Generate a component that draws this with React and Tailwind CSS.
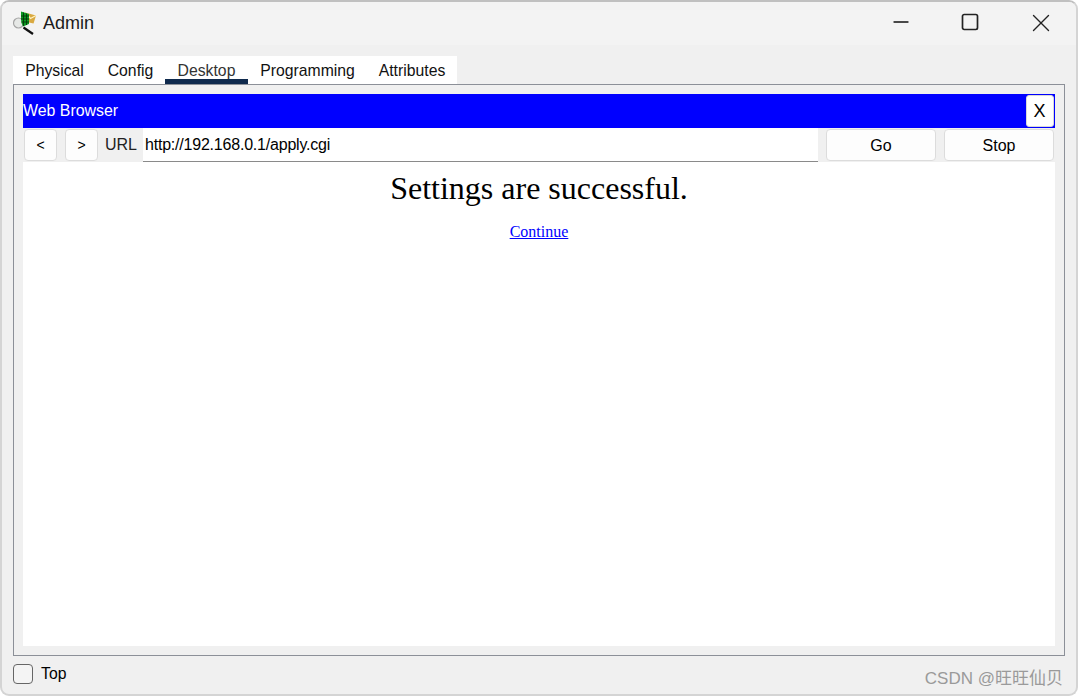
import { Minus, Square, X } from 'lucide-react';

const tabs = [
  { name: 'Physical', width: 'w-[83px]' },
  { name: 'Config', width: 'w-[69px]' },
  { name: 'Desktop', width: 'w-[83px]' },
  { name: 'Programming', width: 'w-[119px]' },
  { name: 'Attributes', width: 'w-[90px]' },
];

function AppIcon() {
  return (
    <svg width="24" height="24" viewBox="0 0 24 24" className="shrink-0">
      <circle cx="5.500" cy="12" r="5" fill="#e6e8e6" stroke="#a5a5a5" strokeWidth="1.200" />
      <path d="M10.500 16.500L20 23" stroke="#111" strokeWidth="2.200" />
      <path d="M12 1.500L23 4.500L20.500 12.500L14 11z" fill="#d9a941" />
      <path d="M13 2L17.500 7.500L23 4.500" fill="none" stroke="#fff2c4" strokeWidth="1.200" />
      <path d="M8 .5L16 3V13L10 15.500Q8 12 8 8z" fill="#0c9a22" />
      <path d="M10.500 1.500V15M13.500 2.500V14M8 5H16M8 8H16M8.500 11H16" stroke="#04380a" strokeWidth=".9" />
    </svg>
  );
}

function Btn({ className, children }) {
  return (
    <button className={'h-[32px] rounded-[4px] border border-[#dcdcdc] bg-[#fdfdfd] pt-px text-black ' + className}>
      {children}
    </button>
  );
}

export default function App() {
  return (
    <div className="h-[696px] w-[1078px] bg-white font-['Liberation_Sans',Arial,sans-serif] text-[16px] text-black">
      <div className="relative flex h-full w-full flex-col overflow-hidden rounded-[9px] border-2 border-[#d4d4d4] border-t-[#c0c0c0] bg-[#f0f0f0]">
        <div className="-mx-[2px] -mt-[2px] flex h-[45px] shrink-0 items-center bg-[#f3f3f3] pl-[13px]">
          <AppIcon />
          <span className="ml-[6px] pt-[2px] text-[18px] text-[#1a1a1a]">Admin</span>
          <div className="ml-auto flex items-center">
            <Minus size={24} strokeWidth={1.3} absoluteStrokeWidth className="-mt-px mr-[47px] text-[#111]" />
            <Square size={20} strokeWidth={1.7} absoluteStrokeWidth className="-mt-px mr-[46px] text-[#222]" />
            <X size={30} strokeWidth={1.4} absoluteStrokeWidth className="mr-[22px] text-[#222]" />
          </div>
        </div>

        <div className="-mx-[2px] flex min-h-0 flex-1 flex-col px-[13px] pt-[11px]">
          <div className="flex h-[28px] w-[444px] shrink-0 bg-white text-[15.75px]">
            {tabs.map((t) => (
              <div key={t.name} className={'flex h-full items-start justify-center pt-[4px] leading-[21px] ' + t.width + (t.name === 'Desktop' ? ' border-b-[5px] border-[#0f2a4d] text-[#333]' : ' text-[#111]')}>
                {t.name}
              </div>
            ))}
          </div>

          <div className="flex h-[572px] shrink-0 flex-col border border-[#8c9098] p-[9px]">
            <div className="flex h-[34px] shrink-0 items-center justify-between bg-[#0000ff] pr-px text-white">
              <span className="text-[15.9px]">Web Browser</span>
              <button className="h-[32px] w-[28px] rounded-[3px] border border-[#d8d8d8] bg-white pr-px text-[18px] text-black">X</button>
            </div>
            <div className="flex h-[34px] shrink-0 items-center pl-px pr-px">
              <Btn className="w-[33px] text-[14px]">&lt;</Btn>
              <Btn className="ml-[8px] w-[33px] text-[14px]">&gt;</Btn>
              <span className="ml-[7px] w-[38px] text-[#222]">URL</span>
              <div className="flex h-[34px] w-[675px] items-center border-b border-[#8a8a8a] bg-white pl-[2px] pt-px tracking-[-0.21px]">
                http://192.168.0.1/apply.cgi
              </div>
              <Btn className="ml-[8px] w-[110px]">Go</Btn>
              <Btn className="ml-[8px] w-[110px]">Stop</Btn>
            </div>
            <div className="flex min-h-0 flex-1 flex-col items-center bg-white font-['Liberation_Serif','Times_New_Roman',serif]">
              <h1 className="mt-[8px] text-[32px] leading-[37px]">Settings are successful.</h1>
              <a href="#" className="mt-[16px] text-[16px] leading-[18px] text-[#0000ff] underline">Continue</a>
            </div>
          </div>

          <div className="flex flex-1 items-center pb-[2px]">
            <span className="h-[20px] w-[20px] rounded-[4px] border border-[#666] bg-[#f4f4f4]" />
            <span className="ml-[8px] text-[15.75px]">Top</span>
          </div>
        </div>

        <span className="absolute bottom-[4px] right-[13px] font-['Liberation_Sans','Noto_Sans_CJK_SC',sans-serif] text-[17px] leading-[22px] text-[#9a9a9a]">
          CSDN @旺旺仙贝
        </span>
      </div>
    </div>
  );
}
